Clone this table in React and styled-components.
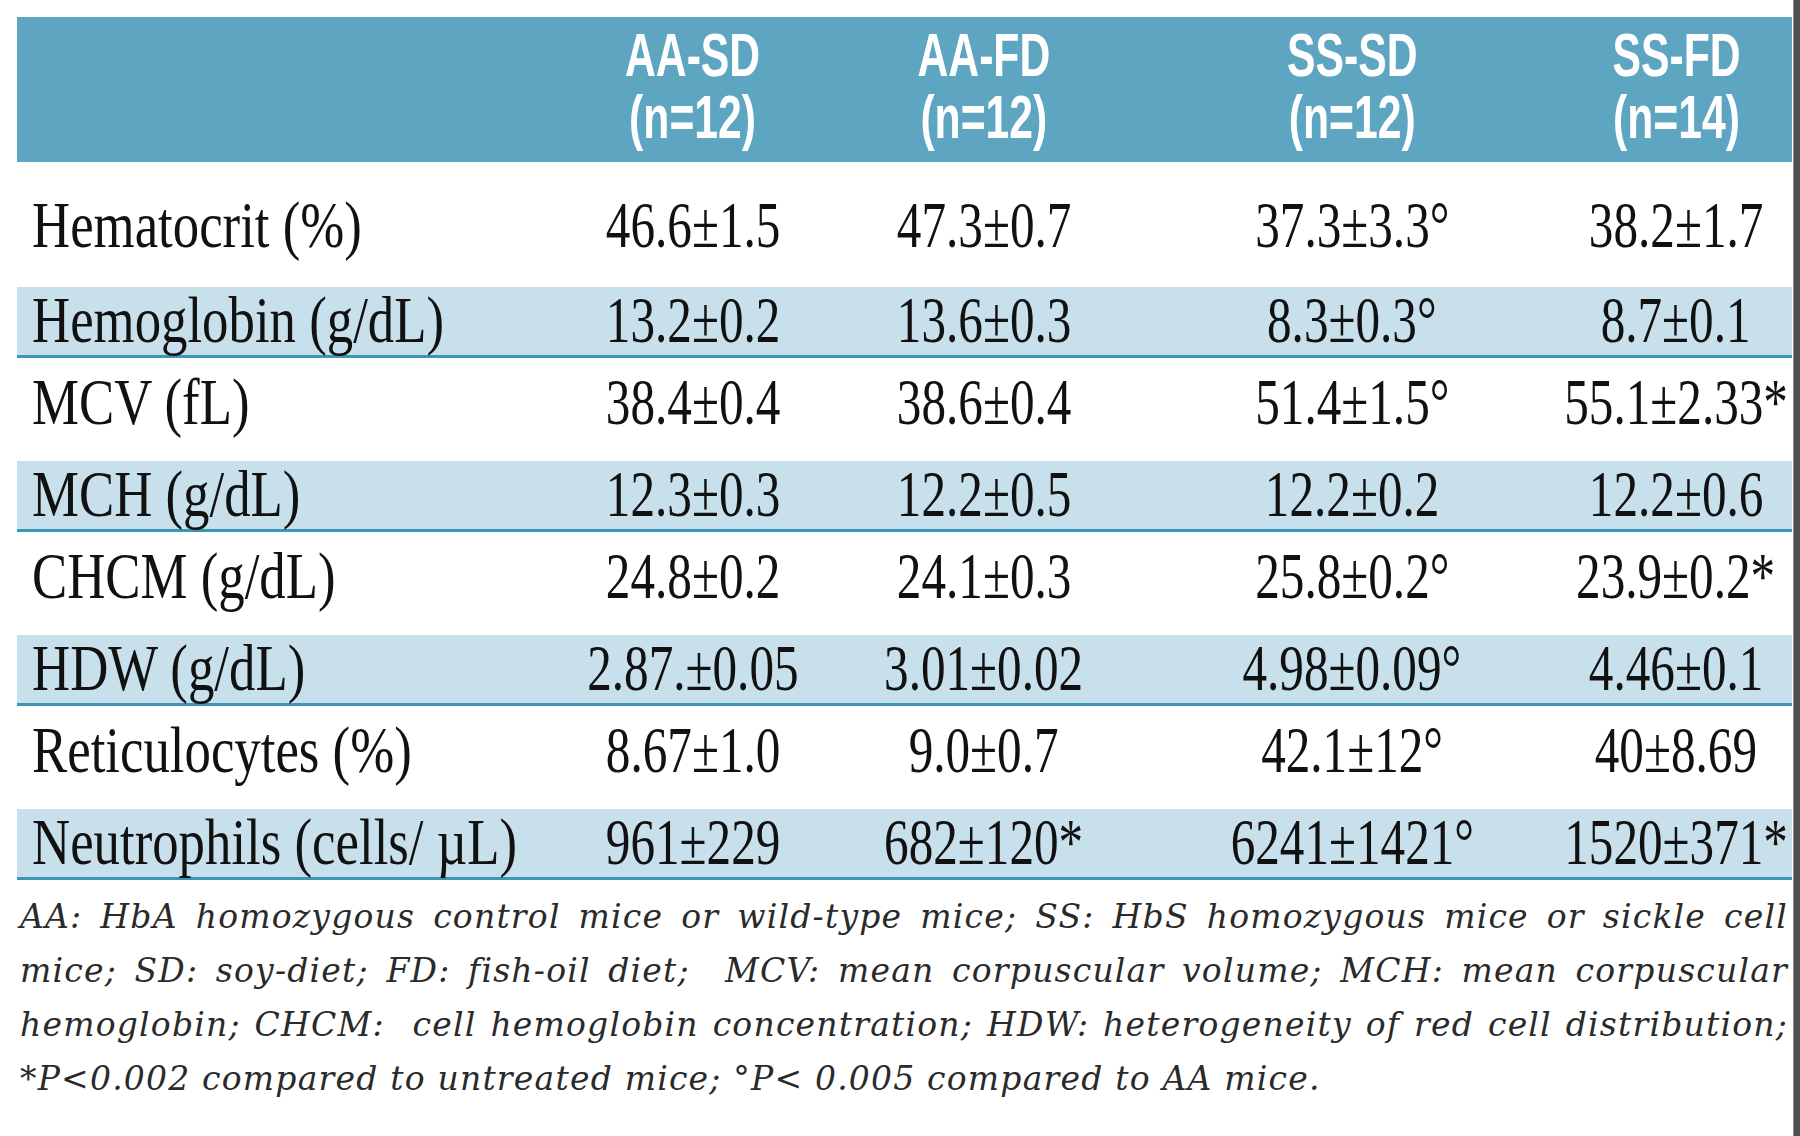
import React from "react";
import styled, { createGlobalStyle } from "styled-components";

const GlobalStyle = createGlobalStyle`
  html, body {
    margin: 0;
    padding: 0;
    background: #fff;
  }
`;

const columns = [
  { name: "AA-SD", n: "(n=12)" },
  { name: "AA-FD", n: "(n=12)" },
  { name: "SS-SD", n: "(n=12)" },
  { name: "SS-FD", n: "(n=14)" },
];

const rows = [
  { label: "Hematocrit (%)", values: ["46.6±1.5", "47.3±0.7", "37.3±3.3°", "38.2±1.7"] },
  { label: "Hemoglobin (g/dL)", values: ["13.2±0.2", "13.6±0.3", "8.3±0.3°", "8.7±0.1"] },
  { label: "MCV (fL)", values: ["38.4±0.4", "38.6±0.4", "51.4±1.5°", "55.1±2.33*"] },
  { label: "MCH (g/dL)", values: ["12.3±0.3", "12.2±0.5", "12.2±0.2", "12.2±0.6"] },
  { label: "CHCM (g/dL)", values: ["24.8±0.2", "24.1±0.3", "25.8±0.2°", "23.9±0.2*"] },
  { label: "HDW (g/dL)", values: ["2.87.±0.05", "3.01±0.02", "4.98±0.09°", "4.46±0.1"] },
  { label: "Reticulocytes (%)", values: ["8.67±1.0", "9.0±0.7", "42.1±12°", "40±8.69"] },
  { label: "Neutrophils (cells/ µL)", values: ["961±229", "682±120*", "6241±1421°", "1520±371*"] },
];

const footnote = [
  "AA: HbA homozygous control mice or wild-type mice; SS: HbS homozygous mice or sickle cell",
  "mice; SD: soy-diet; FD: fish-oil diet;  MCV: mean corpuscular volume; MCH: mean corpuscular",
  "hemoglobin; CHCM:  cell hemoglobin concentration; HDW: heterogeneity of red cell distribution;",
  "*P<0.002 compared to untreated mice; °P< 0.005 compared to AA mice.",
];

const App = () => {
  return (
    <>
      <GlobalStyle />
      <Page>
        <Content>
          <Table>
            <HeaderRow>
              <div />
              {columns.map((col) => (
                <HeaderCell key={col.name}>
                  <HeaderText>
                    {col.name}
                    <br />
                    {col.n}
                  </HeaderText>
                </HeaderCell>
              ))}
            </HeaderRow>
            {rows.map((row, i) => (
              <Row key={row.label} $shaded={i % 2 === 1} $first={i === 0}>
                <LabelCell>
                  <LabelText>{row.label}</LabelText>
                </LabelCell>
                {row.values.map((v, j) => (
                  <ValueCell key={j}>
                    <ValueText>{v}</ValueText>
                  </ValueCell>
                ))}
              </Row>
            ))}
          </Table>
          <Footnote>
            {footnote.map((line, i) => (
              <FootLine key={i} $last={i === footnote.length - 1}>
                {line}
              </FootLine>
            ))}
          </Footnote>
        </Content>
        <EdgeBar />
      </Page>
    </>
  );
};

export default App;

// Styled Components
const Page = styled.div`
  display: flex;
  width: 1800px;
  height: 1136px;
  background: #fff;
  overflow: hidden;
`;

const Content = styled.div`
  flex: 1;
  padding: 17px 1px 0 17px;
`;

const EdgeBar = styled.div`
  width: 7px;
  background: #4f4f4f;
  border-left: 1px solid #8a8a8a;
`;

const Table = styled.div`
  width: 1775px;
`;

const gridColumns = "545px 262px 320px 416px 232px";

const HeaderRow = styled.div`
  display: grid;
  grid-template-columns: ${gridColumns};
  height: 145px;
  box-sizing: border-box;
  padding-top: 7px;
  background: #5ea5c1;
`;

const HeaderCell = styled.div`
  display: flex;
  justify-content: center;
`;

const HeaderText = styled.span`
  display: inline-block;
  font-family: "Liberation Sans", Arial, sans-serif;
  font-weight: bold;
  font-size: 61px;
  line-height: 62px;
  text-align: center;
  color: #fff;
  transform: scaleX(0.7);
  transform-origin: center;
`;

const Row = styled.div`
  display: grid;
  grid-template-columns: ${gridColumns};
  align-items: center;
  box-sizing: border-box;
  height: ${(props) => (props.$first ? "125px" : props.$shaded ? "71px" : "103px")};
  padding-top: ${(props) => (props.$first ? "17px" : "0")};
  padding-bottom: 16px;
  background: ${(props) => (props.$shaded ? "#c8e0eb" : "#fff")};
  border-bottom: ${(props) => (props.$shaded ? "3px solid #3a98b6" : "none")};
`;

const LabelCell = styled.div`
  padding-left: 15px;
  white-space: nowrap;
`;

const ValueCell = styled.div`
  display: flex;
  justify-content: center;
  white-space: nowrap;
  min-width: 0;
`;

const LabelText = styled.span`
  display: inline-block;
  font-family: "Liberation Serif", "Times New Roman", serif;
  font-size: 66px;
  line-height: 66px;
  color: #111;
  transform: scaleX(0.8);
  transform-origin: left center;
`;

const ValueText = styled.span`
  flex: none;
  display: inline-block;
  font-family: "Liberation Serif", "Times New Roman", serif;
  font-size: 66px;
  line-height: 66px;
  color: #111;
  transform: scaleX(0.745);
  transform-origin: center;
`;

const Footnote = styled.div`
  width: 1768px;
  padding: 10px 0 0 3px;
  font-family: "DejaVu Serif", serif;
  font-style: italic;
  font-size: 33px;
  line-height: 54px;
  letter-spacing: 1.2px;
  color: #2a2a2a;
`;

const FootLine = styled.div`
  text-align: justify;
  text-align-last: ${(props) => (props.$last ? "left" : "justify")};
  white-space: pre-wrap;
`;
